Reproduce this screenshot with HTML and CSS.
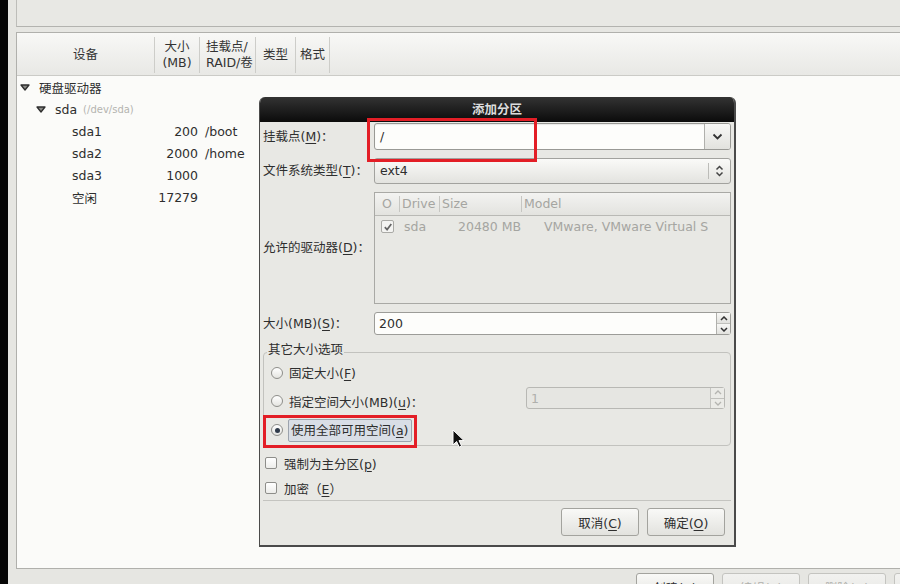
FILE: index.html
```html
<!DOCTYPE html>
<html lang="zh-CN">
<head>
    <meta charset="UTF-8">
    <title>添加分区</title>
    <link rel="stylesheet" href="styles.css">
</head>
<body>
<div class="screen">
    <div class="edge"></div>
    <div class="main">
        <div class="top-panel"></div>
        <div class="tree">
            <div class="tree-head">
                <div class="th th-dev">设备</div>
                <div class="th th-size">大小<br>(MB)</div>
                <div class="th th-mount">挂载点/<br>RAID/卷</div>
                <div class="th th-type">类型</div>
                <div class="th th-fmt">格式</div>
            </div>
            <div class="tree-body">
                <div class="tree-row">
                    <div class="cell-dev lvl-0">
                        <span class="expander"><svg width="10" height="7" viewBox="0 0 10 7"><path d="M1 1h8L5 6z" fill="#8a8a86" stroke="#2e2e2e" stroke-width="1.3" stroke-linejoin="round"/></svg></span>硬盘驱动器
                    </div>
                </div>
                <div class="tree-row">
                    <div class="cell-dev lvl-1">
                        <span class="expander"><svg width="10" height="7" viewBox="0 0 10 7"><path d="M1 1h8L5 6z" fill="#8a8a86" stroke="#2e2e2e" stroke-width="1.3" stroke-linejoin="round"/></svg></span>sda <span class="dev-path">(/dev/sda)</span>
                    </div>
                </div>
                <div class="tree-row">
                    <div class="cell-dev lvl-2">sda1</div>
                    <div class="cell-size">200</div>
                    <div class="cell-mount">/boot</div>
                </div>
                <div class="tree-row">
                    <div class="cell-dev lvl-2">sda2</div>
                    <div class="cell-size">2000</div>
                    <div class="cell-mount">/home</div>
                </div>
                <div class="tree-row">
                    <div class="cell-dev lvl-2">sda3</div>
                    <div class="cell-size">1000</div>
                    <div class="cell-mount"></div>
                </div>
                <div class="tree-row">
                    <div class="cell-dev lvl-2">空闲</div>
                    <div class="cell-size">17279</div>
                    <div class="cell-mount"></div>
                </div>
            </div>
        </div>
        <div class="actions">
            <button class="btn">创建(<u>C</u>)</button>
            <button class="btn off">编辑(<u>E</u>)</button>
            <button class="btn off">删除(<u>D</u>)</button>
            <button class="btn off">重设(<u>s</u>)</button>
        </div>
    </div>

    <div class="dialog">
        <div class="dlg-title">添加分区</div>
        <div class="dlg-body">
            <div class="form">
                <label class="lbl">挂载点(<u>M</u>)：</label>
                <div class="entry-combo">
                    <div class="entry-text">/</div>
                    <div class="drop-btn"><svg width="11" height="7" viewBox="0 0 11 7"><path d="M1.5 1.5l4 4 4-4" fill="none" stroke="#333" stroke-width="1.8"/></svg></div>
                </div>

                <label class="lbl">文件系统类型(<u>T</u>)：</label>
                <div class="combo">
                    <div class="combo-text">ext4</div>
                    <div class="combo-arrow"><svg width="9" height="14" viewBox="0 0 9 14"><path d="M1.5 5.5l3-3 3 3M1.5 8.5l3 3 3-3" fill="none" stroke="#444" stroke-width="1.5"/></svg></div>
                </div>

                <label class="lbl">允许的驱动器(<u>D</u>)：</label>
                <div class="drives">
                    <div class="drv-head">
                        <div class="dh dh-o">O</div>
                        <div class="dh dh-drive">Drive</div>
                        <div class="dh dh-size">Size</div>
                        <div class="dh dh-model">Model</div>
                    </div>
                    <div class="drv-row">
                        <span class="dcheck"><svg width="10" height="10" viewBox="0 0 10 10"><path d="M1.8 5.2l2.3 2.4 4.2-5.6" fill="none" stroke="#666" stroke-width="1.7"/></svg></span>
                        <span class="dv-drive">sda</span>
                        <span class="dv-size">20480 MB</span>
                        <span class="dv-model">VMware, VMware Virtual S</span>
                    </div>
                </div>

                <label class="lbl">大小(MB)(<u>S</u>)：</label>
                <div class="spin">
                    <div class="spin-text">200</div>
                    <div class="spin-btns">
                        <span class="sb"><svg width="8" height="5" viewBox="0 0 8 5"><path d="M1 4l3-3 3 3" fill="none" stroke="#333" stroke-width="1.5"/></svg></span>
                        <span class="sb"><svg width="8" height="5" viewBox="0 0 8 5"><path d="M1 1l3 3 3-3" fill="none" stroke="#333" stroke-width="1.5"/></svg></span>
                    </div>
                </div>
            </div>

            <div class="frame">
                <div class="frame-title">其它大小选项</div>
                <div class="radio-row r1">
                    <span class="radio"></span>
                    <span class="opt">固定大小(<u>F</u>)</span>
                </div>
                <div class="radio-row r2">
                    <span class="radio"></span>
                    <span class="opt">指定空间大小(MB)(<u>u</u>)：</span>
                    <div class="spin spin-off">
                        <div class="spin-text">1</div>
                        <div class="spin-btns">
                            <span class="sb"><svg width="8" height="5" viewBox="0 0 8 5"><path d="M1 4l3-3 3 3" fill="none" stroke="#b4b4b0" stroke-width="1.3"/></svg></span>
                            <span class="sb"><svg width="8" height="5" viewBox="0 0 8 5"><path d="M1 1l3 3 3-3" fill="none" stroke="#b4b4b0" stroke-width="1.3"/></svg></span>
                        </div>
                    </div>
                </div>
                <div class="radio-row r3">
                    <span class="radio on"></span>
                    <span class="opt focus">使用全部可用空间(<u>a</u>)</span>
                </div>
            </div>

            <div class="check-row c1">
                <span class="check"></span>
                <span class="opt">强制为主分区(<u>p</u>)</span>
            </div>
            <div class="check-row c2">
                <span class="check"></span>
                <span class="opt">加密（<u>E</u>）</span>
            </div>

            <div class="sep"></div>

            <div class="dlg-buttons">
                <button class="btn">取消(<u>C</u>)</button>
                <button class="btn">确定(<u>O</u>)</button>
            </div>
        </div>
    </div>

    <div class="mark mark-mount"></div>
    <div class="mark mark-all"></div>

    <svg class="cursor" width="13" height="19" viewBox="0 0 13 19">
        <path d="M1 1v15l3.6-3.5 2.6 5.6 2.4-1.1-2.6-5.4h5z" fill="#111" stroke="#fff" stroke-width="1"/>
    </svg>
</div>
</body>
</html>
```

FILE: styles.css
```css
body {
    margin: 0;
    font-family: "DejaVu Sans", "Noto Sans CJK SC", sans-serif;
    font-size: 12.5px;
    color: #2e2e2e;
    background: #e6e6e2;
    overflow: hidden;
}

u {
    text-underline-offset: 2px;
}

.screen {
    position: relative;
    display: flex;
    width: 900px;
    height: 584px;
    overflow: hidden;
}

.edge {
    flex: none;
    width: 8px;
    background: #050505;
}

.main {
    flex: 1;
    min-width: 0;
    padding-left: 8px;
    display: flex;
    flex-direction: column;
}

.top-panel {
    flex: none;
    height: 26px;
    border-left: 1px solid #bdbdb9;
    border-bottom: 1px solid #b3b3af;
    background: #e8e8e4;
    margin-right: -10px;
}

.tree {
    flex: none;
    margin-top: 5px;
    margin-right: -10px;
    height: 537px;
    box-sizing: border-box;
    border: 1px solid #b0b0ac;
    background: #fbfbf9;
}

.tree-head {
    display: flex;
    height: 42px;
    border-bottom: 1px solid #cbcbc7;
    background: linear-gradient(#f8f8f6, #e8e8e5);
}

.th {
    display: flex;
    align-items: center;
    justify-content: center;
    text-align: center;
    margin: 4px 0 2px;
    line-height: 16px;
    border-right: 1px solid #cdcdc9;
    color: #333;
    box-sizing: border-box;
}

.th-dev { width: 138px; }
.th-size { width: 45px; }
.th-mount { width: 56px; justify-content: flex-start; text-align: left; padding-left: 6px; }
.th-type { width: 40px; }
.th-fmt { width: 34px; }

.tree-row {
    display: grid;
    grid-template-columns: 138px 45px 1fr;
    height: 22px;
    align-items: center;
    white-space: nowrap;
}

.cell-dev {
    display: flex;
    align-items: center;
}

.lvl-0 { padding-left: 3px; }
.lvl-1 { padding-left: 19px; }
.lvl-2 { padding-left: 55px; }

.expander {
    display: inline-flex;
    width: 19px;
}

.dev-path {
    font-size: 10px;
    color: #b4b4b0;
    margin-left: 6px;
}

.cell-size {
    text-align: right;
    padding-right: 2px;
}

.cell-mount {
    padding-left: 5px;
}

.actions {
    display: flex;
    gap: 8px;
    margin-top: 4px;
    padding-left: 620px;
}

.btn {
    flex: none;
    width: 78px;
    height: 28px;
    font: inherit;
    color: #2e2e2e;
    border: 1px solid #a3a39e;
    border-radius: 3px;
    background: linear-gradient(#f9f9f7, #e2e2de);
    padding: 0;
}

.btn.off {
    color: #b0b0ac;
    border-color: #c4c4c0;
    background: linear-gradient(#f2f2f0, #e6e6e2);
}

/* dialog window */
.dialog {
    position: absolute;
    left: 259px;
    top: 97px;
    width: 477px;
    height: 450px;
    box-sizing: border-box;
    background: #e8e8e4;
    border: 1px solid #4a4a4a;
    border-top: none;
    border-right-width: 2px;
    border-bottom-width: 2px;
    border-radius: 6px 6px 0 0;
    overflow: hidden;
}

.dlg-title {
    height: 25px;
    line-height: 26px;
    text-align: center;
    font-weight: bold;
    color: #dcdcdc;
    background: linear-gradient(#333, #0b0b0b);
}

.dlg-body {
    padding: 1px 3px 0;
}

.form {
    display: grid;
    grid-template-columns: 111px 1fr;
    grid-template-rows: 27px 26px 112px 23px;
    row-gap: 8px;
    align-items: center;
}

.lbl {
    white-space: nowrap;
    line-height: 16px;
}

.entry-combo {
    align-self: stretch;
    display: flex;
    border: 1px solid #999995;
    border-radius: 3px;
    background: #fdfdfb;
    box-shadow: inset 0 1px 1px rgba(0, 0, 0, 0.08);
}

.entry-text {
    flex: 1;
    padding-left: 5px;
    line-height: 25px;
}

.drop-btn {
    width: 25px;
    display: flex;
    align-items: center;
    justify-content: center;
    border-left: 1px solid #b0b0ac;
    border-radius: 0 2px 2px 0;
    background: linear-gradient(#f8f8f6, #e2e2de);
}

.combo {
    align-self: stretch;
    display: flex;
    border: 1px solid #a2a29e;
    border-radius: 3px;
    background: linear-gradient(#fafaf8, #e3e3df);
}

.combo-text {
    flex: 1;
    padding-left: 5px;
    line-height: 24px;
}

.combo-arrow {
    width: 21px;
    margin: 4px 0;
    display: flex;
    align-items: center;
    justify-content: center;
    border-left: 1px solid #bcbcb8;
}

.drives {
    align-self: stretch;
    border: 1px solid #a9a9a5;
    background: #e8e8e4;
    color: #a5a5a1;
}

.drv-head {
    display: flex;
    height: 22px;
    align-items: center;
    border-bottom: 1px solid #b9b9b5;
    background: linear-gradient(#f3f3f1, #e3e3df);
}

.dh {
    height: 16px;
    line-height: 16px;
    border-right: 1px solid #c6c6c2;
    box-sizing: border-box;
}

.dh-o { width: 25px; padding-left: 7px; }
.dh-drive { width: 40px; padding-left: 2px; }
.dh-size { width: 82px; padding-left: 2px; }
.dh-model { border-right: none; padding-left: 2px; }

.drv-row {
    display: flex;
    align-items: center;
    height: 21px;
    white-space: nowrap;
}

.dcheck {
    display: inline-flex;
    align-items: center;
    justify-content: center;
    width: 11px;
    height: 11px;
    margin-left: 6px;
    border: 1px solid #aaaaa6;
    border-radius: 2px;
    background: #f4f4f2;
}

.dv-drive { margin-left: 10px; width: 54px; }
.dv-size { width: 86px; }

.spin {
    align-self: stretch;
    display: flex;
    border: 1px solid #9c9c98;
    border-radius: 3px;
    background: #fdfdfb;
}

.spin-text {
    flex: 1;
    padding-left: 4px;
    line-height: 21px;
}

.spin-btns {
    width: 13px;
    display: flex;
    flex-direction: column;
    border-left: 1px solid #b0b0ac;
}

.sb {
    flex: 1;
    display: flex;
    align-items: center;
    justify-content: center;
    background: linear-gradient(#f8f8f6, #e2e2de);
}

.sb + .sb {
    border-top: 1px solid #c0c0bc;
}

.frame {
    margin-top: 17px;
    height: 94px;
    box-sizing: border-box;
    border: 1px solid #c2c2be;
    border-radius: 4px;
}

.frame-title {
    width: max-content;
    height: 16px;
    line-height: 16px;
    margin: -11px 0 0 3px;
    padding: 0 1px;
    background: #e8e8e4;
}

.radio-row {
    display: flex;
    align-items: center;
    padding-left: 7px;
    white-space: nowrap;
}

.r1 { height: 29px; }
.r2 { height: 28px; }
.r3 { height: 30px; }

.radio {
    flex: none;
    width: 10px;
    height: 10px;
    border: 1px solid #8e8e8a;
    border-radius: 50%;
    background: linear-gradient(#ffffff, #e4e4e0);
    position: relative;
    margin-right: 6px;
}

.radio.on::after {
    content: "";
    position: absolute;
    left: 2.5px;
    top: 2.5px;
    width: 5px;
    height: 5px;
    border-radius: 50%;
    background: #2f3a4a;
}

.opt.focus {
    height: 21px;
    line-height: 21px;
    padding: 0 3px 0 2px;
    margin-left: -1px;
    border: 1px solid #9ca3ad;
    border-radius: 2px;
    background: #d9dee6;
}

.spin-off {
    flex: none;
    width: 199px;
    height: 22px;
    box-sizing: border-box;
    margin-left: auto;
    margin-right: 5px;
    border-color: #b8b8b4;
    background: #e6e6e2;
    color: #b0b0ac;
}

.spin-off .spin-btns {
    border-left-color: #c4c4c0;
}

.spin-off .sb {
    background: #ebebe7;
}

.check-row {
    display: flex;
    align-items: center;
    padding-left: 2px;
}

.c1 { margin-top: 4px; height: 26px; }
.c2 { height: 24px; }

.check {
    flex: none;
    width: 10px;
    height: 10px;
    border: 1px solid #8e8e8a;
    border-radius: 2px;
    background: linear-gradient(#ffffff, #ededea);
    margin-right: 7px;
}

.sep {
    height: 1px;
    background: #c4c4c0;
}

.dlg-buttons {
    display: flex;
    justify-content: flex-end;
    gap: 8px;
    margin-top: 7px;
    padding-right: 6px;
}

.mark {
    position: absolute;
    box-sizing: border-box;
    border: 3px solid #e31e26;
}

.mark-mount {
    left: 367px;
    top: 118px;
    width: 170px;
    height: 44px;
}

.mark-all {
    left: 263px;
    top: 415px;
    width: 154px;
    height: 33px;
}

.cursor {
    position: absolute;
    left: 452px;
    top: 429px;
}
```
